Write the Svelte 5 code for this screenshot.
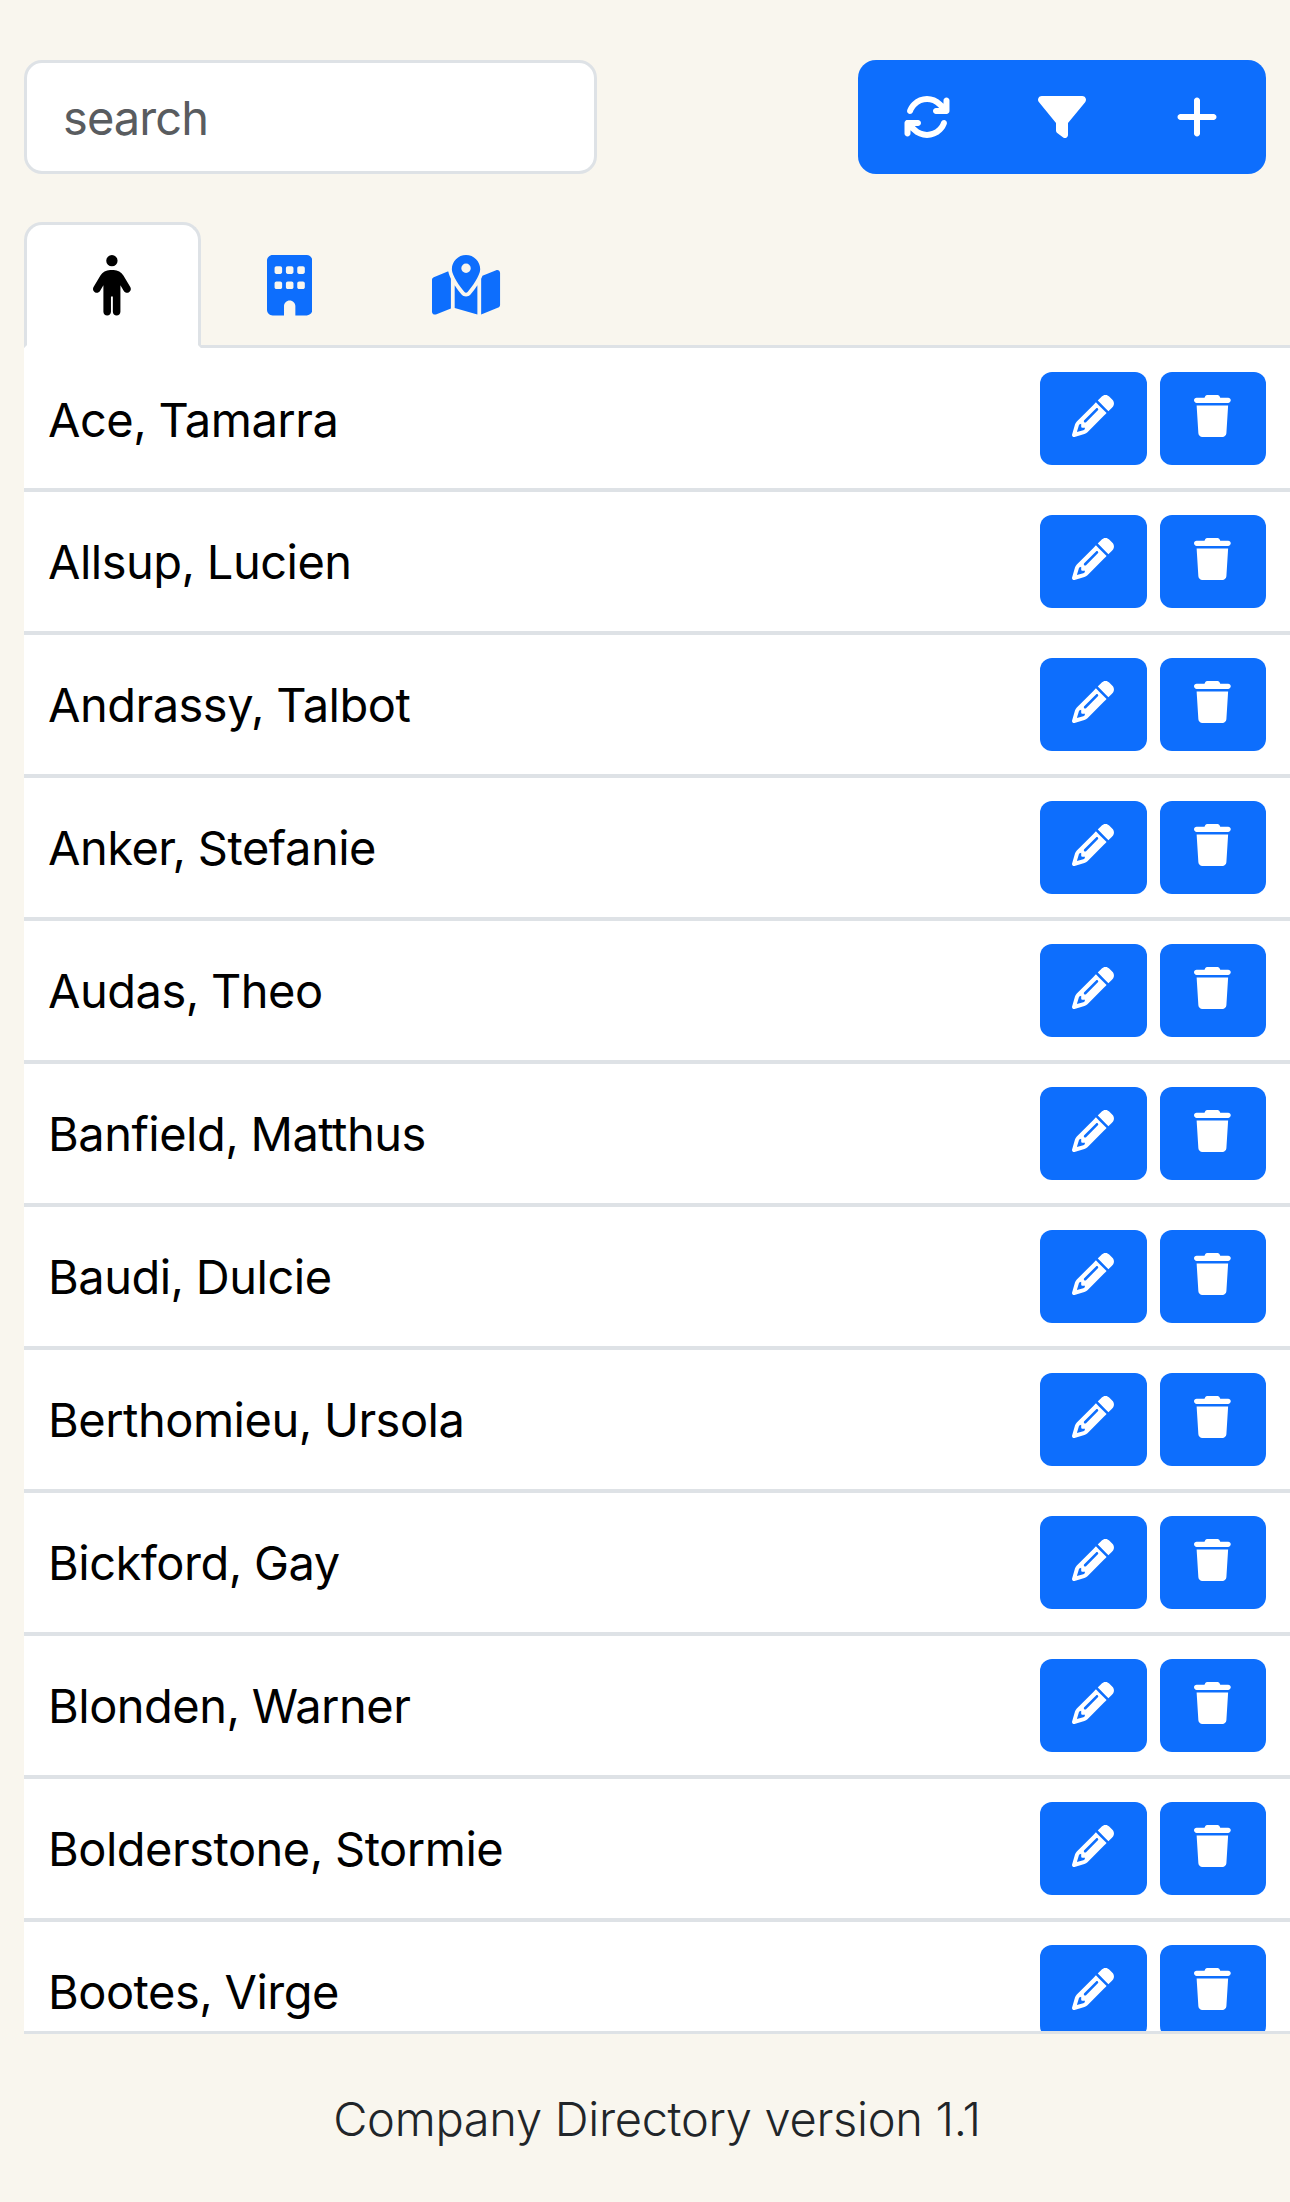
<script>
  const icons = {
    refresh: {
      width: 512,
      path: 'M105.1 202.6c7.7-21.8 20.2-42.3 37.8-59.8c62.5-62.5 163.8-62.5 226.3 0L386.3 160H352c-17.7 0-32 14.3-32 32s14.3 32 32 32H463.5c0 0 0 0 0 0h.4c17.7 0 32-14.3 32-32V80c0-17.7-14.3-32-32-32s-32 14.3-32 32v35.2L414.4 97.6c-87.5-87.5-229.3-87.5-316.8 0C73.2 122 55.6 150.7 44.8 181.4c-5.9 16.7 2.9 34.9 19.5 40.8s34.9-2.9 40.8-19.5zM39 289.3c-5 1.5-9.8 4.2-13.7 8.2c-4 4-6.7 8.8-8.1 14c-.3 1.2-.6 2.5-.8 3.8c-.3 1.7-.4 3.4-.4 5.1V432c0 17.7 14.3 32 32 32s32-14.3 32-32V396.9l17.6 17.5 0 0c87.5 87.4 229.3 87.4 316.7 0c24.4-24.4 42.1-53.1 52.9-83.7c5.9-16.7-2.9-34.9-19.5-40.8s-34.9 2.9-40.8 19.5c-7.7 21.8-20.2 42.3-37.8 59.8c-62.5 62.5-163.8 62.5-226.3 0l-.1-.1L125.6 352H160c17.7 0 32-14.3 32-32s-14.3-32-32-32H48.4c-1.6 0-3.2 .1-4.8 .3s-3.1 .5-4.6 1z'
    },
    filter: {
      width: 512,
      path: 'M3.9 54.9C10.5 40.9 24.5 32 40 32H472c15.5 0 29.5 8.9 36.1 22.9s4.6 30.5-5.2 42.5L320 320.9V448c0 12.1-6.8 23.2-17.7 28.6s-23.8 4.3-33.5-3l-64-48c-8.1-6-12.8-15.5-12.8-25.6V320.9L9 97.3C-.7 85.4-2.8 68.8 3.9 54.9z'
    },
    plus: {
      width: 448,
      path: 'M256 80c0-17.7-14.3-32-32-32s-32 14.3-32 32V224H48c-17.7 0-32 14.3-32 32s14.3 32 32 32H192V432c0 17.7 14.3 32 32 32s32-14.3 32-32V288H400c17.7 0 32-14.3 32-32s-14.3-32-32-32H256V80z'
    },
    person: {
      width: 320,
      path: 'M112 48a48 48 0 1 1 96 0 48 48 0 1 1 -96 0zm40 304V480c0 17.7-14.3 32-32 32s-32-14.3-32-32V256.9L59.4 304.5c-9.1 15.1-28.8 20-43.9 10.9s-20-28.8-10.9-43.9l58.3-97c17.4-28.9 48.6-46.6 82.3-46.6h29.7c33.7 0 64.9 17.7 82.3 46.6l58.3 97c9.1 15.1 4.2 34.8-10.9 43.9s-34.8 4.2-43.9-10.9L232 256.9V480c0 17.7-14.3 32-32 32s-32-14.3-32-32V352H152z'
    },
    building: {
      width: 384,
      path: 'M48 0C21.5 0 0 21.5 0 48V464c0 26.5 21.5 48 48 48h96V432c0-26.5 21.5-48 48-48s48 21.5 48 48v80h96c26.5 0 48-21.5 48-48V48c0-26.5-21.5-48-48-48H48zM64 240c0-8.8 7.2-16 16-16h32c8.8 0 16 7.2 16 16v32c0 8.8-7.2 16-16 16H80c-8.8 0-16-7.2-16-16V240zm112-16h32c8.8 0 16 7.2 16 16v32c0 8.8-7.2 16-16 16H176c-8.8 0-16-7.2-16-16V240c0-8.8 7.2-16 16-16zm80 16c0-8.8 7.2-16 16-16h32c8.8 0 16 7.2 16 16v32c0 8.8-7.2 16-16 16H272c-8.8 0-16-7.2-16-16V240zM80 96h32c8.8 0 16 7.2 16 16v32c0 8.8-7.2 16-16 16H80c-8.8 0-16-7.2-16-16V112c0-8.8 7.2-16 16-16zm80 16c0-8.8 7.2-16 16-16h32c8.8 0 16 7.2 16 16v32c0 8.8-7.2 16-16 16H176c-8.8 0-16-7.2-16-16V112zM272 96h32c8.8 0 16 7.2 16 16v32c0 8.8-7.2 16-16 16H272c-8.8 0-16-7.2-16-16V112c0-8.8 7.2-16 16-16z'
    },
    map: {
      width: 576,
      path: 'M408 120c0 54.6-73.1 151.9-105.2 192c-7.7 9.6-22 9.6-29.6 0C241.1 271.9 168 174.6 168 120C168 53.7 221.7 0 288 0s120 53.7 120 120zm8 80.4c3.5-6.9 6.7-13.8 9.6-20.6c.5-1.2 1-2.5 1.5-3.7l116-46.4C558.9 123.4 576 135 576 152V422.8c0 9.8-6 18.6-15.1 22.3L416 503V200.4zM137.6 138.3c2.4 14.1 7.2 28.3 12.8 41.5c2.9 6.8 6.1 13.7 9.6 20.6V451.8L32.9 502.7C17.1 509 0 497.4 0 480.4V209.6c0-9.8 6-18.6 15.1-22.3l122.6-49zM327.8 332c13.9-17.4 35.7-45.7 56.2-77V504.3L192 449.4V255c20.5 31.3 42.3 59.6 56.2 77c20.5 25.6 59.1 25.6 79.6 0zM288 152a40 40 0 1 0 0-80 40 40 0 1 0 0 80z'
    },
    pencil: {
      width: 512,
      path: 'M410.3 231l11.3-11.3-33.9-33.9-62.1-62.1L291.7 89.8l-11.3 11.3-22.6 22.6L58.6 322.9c-10.4 10.4-18 23.3-22.2 37.4L1 480.7c-2.5 8.4-.2 17.5 6.1 23.7s15.3 8.5 23.7 6.1l120.3-35.4c14.1-4.2 27-11.8 37.4-22.2L387.7 253.7 410.3 231zM160 399.4l-9.1 22.7c-4 3.1-8.5 5.4-13.3 6.9L59.4 452l23-78.1c1.4-4.9 3.8-9.4 6.9-13.3l22.7-9.1v32c0 8.8 7.2 16 16 16h32zM362.7 18.7L348.3 33.2 325.7 55.8 314.3 67.1l33.9 33.9 62.1 62.1 33.9 33.9 11.3-11.3 22.6-22.6 14.5-14.5c25-25 25-65.5 0-90.5L453.3 18.7c-25-25-65.5-25-90.5 0zm-47.4 168l-144 144c-6.2 6.2-16.4 6.2-22.6 0s-6.2-16.4 0-22.6l144-144c6.2-6.2 16.4-6.2 22.6 0s6.2 16.4 0 22.6z'
    },
    trash: {
      width: 448,
      path: 'M135.2 17.7L128 32H32C14.3 32 0 46.3 0 64S14.3 96 32 96H416c17.7 0 32-14.3 32-32s-14.3-32-32-32H320l-7.2-14.3C307.4 6.8 296.3 0 284.2 0H163.8c-12.1 0-23.2 6.8-28.6 17.7zM416 128H32L53.2 467c1.6 25.3 22.6 45 47.9 45H346.9c25.3 0 46.3-19.7 47.9-45L416 128z'
    }
  };

  const toolbar = [
    { icon: 'refresh', label: 'Refresh' },
    { icon: 'filter', label: 'Filter' },
    { icon: 'plus', label: 'Add' }
  ];

  const tabs = [
    { id: 'personnel', icon: 'person' },
    { id: 'departments', icon: 'building' },
    { id: 'locations', icon: 'map' }
  ];

  const personnel = [
    'Ace, Tamarra',
    'Allsup, Lucien',
    'Andrassy, Talbot',
    'Anker, Stefanie',
    'Audas, Theo',
    'Banfield, Matthus',
    'Baudi, Dulcie',
    'Berthomieu, Ursola',
    'Bickford, Gay',
    'Blonden, Warner',
    'Bolderstone, Stormie',
    'Bootes, Virge'
  ];

  let activeTab = $state('personnel');
  let search = $state('');

  let visible = $derived(
    personnel.filter((name) => name.toLowerCase().includes(search.toLowerCase()))
  );
</script>

{#snippet icon(name)}
  <svg class="icon" viewBox="0 0 {icons[name].width} 512" fill="currentColor" aria-hidden="true">
    <path d={icons[name].path} />
  </svg>
{/snippet}

<div class="app">
  <header class="app-header">
    <input class="search" type="text" placeholder="search" bind:value={search} />
    <div class="btn-group" role="group">
      {#each toolbar as item}
        <button class="btn tool" type="button" aria-label={item.label}>
          {@render icon(item.icon)}
        </button>
      {/each}
    </div>
  </header>

  <div class="tabs" role="tablist">
    {#each tabs as tab}
      <button
        class="tab"
        class:active={activeTab === tab.id}
        type="button"
        role="tab"
        aria-label={tab.id}
        aria-selected={activeTab === tab.id}
        onclick={() => (activeTab = tab.id)}
      >
        {@render icon(tab.icon)}
      </button>
    {/each}
  </div>

  <main class="tab-content">
    {#each visible as name}
      <div class="row">
        <span class="name">{name}</span>
        <div class="actions">
          <button class="btn action" type="button" aria-label="Edit">
            {@render icon('pencil')}
          </button>
          <button class="btn action" type="button" aria-label="Delete">
            {@render icon('trash')}
          </button>
        </div>
      </div>
    {/each}
  </main>

  <footer class="app-footer">
    <p>Company Directory version 1.1</p>
  </footer>
</div>

<style>
  :global(body) {
    margin: 0;
    background: #f9f6ee;
  }

  .app {
    box-sizing: border-box;
    display: flex;
    flex-direction: column;
    height: 2202px;
    padding: 60px 0 0 24px;
    overflow: hidden;
    font-family: Inter, 'Liberation Sans', sans-serif;
    font-size: 47px;
    line-height: 72px;
    color: #212529;
  }

  .icon {
    display: block;
    height: 48px;
    width: auto;
  }

  .app-header {
    display: flex;
    justify-content: space-between;
    flex: none;
    height: 114px;
    margin: 0 24px 48px 0;
  }

  .search {
    box-sizing: border-box;
    width: 573px;
    padding: 1px 36px 0;
    border: 3px solid #dee2e6;
    border-radius: 18px;
    outline: none;
    background: #fff;
    font: inherit;
    letter-spacing: -0.9px;
    color: #212529;
  }

  .search::placeholder {
    color: #595c5f;
    opacity: 1;
  }

  .btn {
    display: flex;
    align-items: center;
    justify-content: center;
    padding: 0;
    border: 0;
    background: #0d6efd;
    color: #fff;
    cursor: pointer;
  }

  .btn-group {
    display: flex;
    width: 408px;
    border-radius: 18px;
    overflow: hidden;
  }

  .tool {
    width: 135px;
  }

  .tool:first-child,
  .tool:last-child {
    width: 136.5px;
  }

  .tool:first-child {
    padding-left: 1.5px;
  }

  .tool:last-child {
    padding-right: 1.5px;
  }

  /* Tabs */
  .tabs {
    display: flex;
    flex: none;
    height: 123px;
    border-bottom: 3px solid #dee2e6;
  }

  .tab {
    box-sizing: border-box;
    display: flex;
    justify-content: center;
    width: 177px;
    height: 126px;
    padding: 30px 0 0;
    border: 3px solid transparent;
    border-radius: 18px 18px 0 0;
    background: transparent;
    color: #0d6efd;
    cursor: pointer;
  }

  .tab:first-child {
    padding-right: 1.5px;
  }

  .tab .icon {
    height: 60.5px;
  }

  .tab.active {
    border-color: #dee2e6 #dee2e6 #fff;
    background: #fff;
    color: #000;
  }

  /* Personnel list */
  .tab-content {
    flex: none;
    box-sizing: border-box;
    height: 1686px;
    padding-top: 1px;
    border-bottom: 3px solid #dee2e6;
    background: #fff;
    overflow: hidden;
  }

  .row {
    display: flex;
    align-items: center;
    justify-content: space-between;
    height: 139px;
    padding: 0 24px;
    border-bottom: 4px solid #dee2e6;
    color: #000;
  }

  .name {
    letter-spacing: -0.5px;
    word-spacing: -0.5px;
  }

  .row:first-child .name {
    padding-top: 2px;
  }

  .actions {
    display: flex;
    gap: 13px;
  }

  .action {
    box-sizing: border-box;
    width: 106.5px;
    height: 93px;
    padding-bottom: 5px;
    border-radius: 12px;
  }

  .action .icon {
    height: 42px;
  }

  .app-footer {
    padding-top: 49px;
    text-align: center;
    font-weight: 300;
    letter-spacing: -0.3px;
  }

  .app-footer p {
    margin: 0;
  }
</style>
